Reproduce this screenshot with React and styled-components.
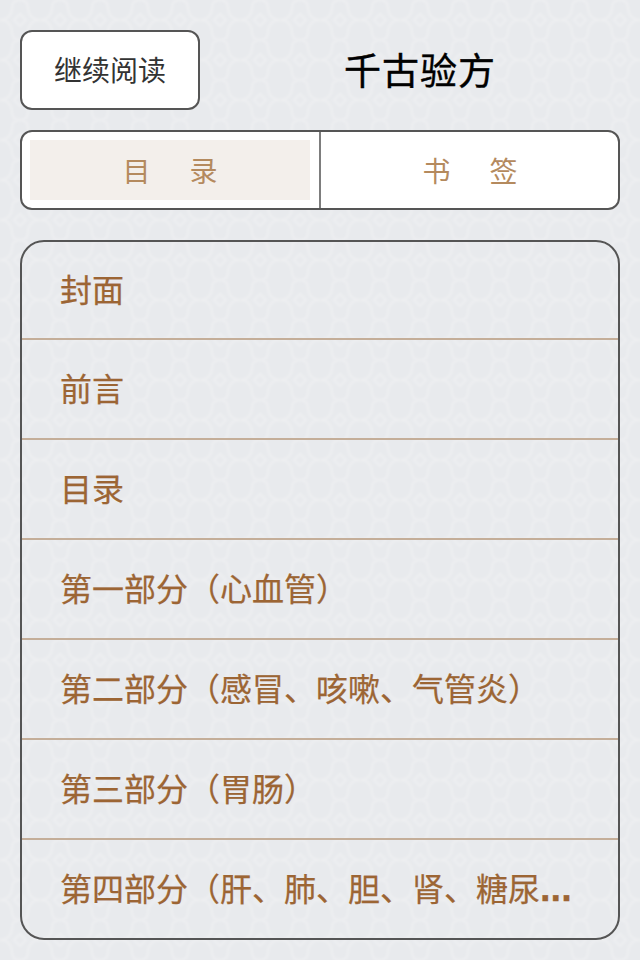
import React from "react"
import styled, { createGlobalStyle } from "styled-components"

const tile = `<svg xmlns='http://www.w3.org/2000/svg' width='40' height='40'><defs><filter id='b' x='-10%' y='-10%' width='120%' height='120%'><feGaussianBlur stdDeviation='1'/></filter></defs><rect width='40' height='40' fill='#e8eaed'/><g filter='url(#b)' fill='none' stroke='#eeeff1' stroke-width='2'><path d='M0 20C8 20 12 14 12 8S16 0 20 0s8 2 8 8 4 12 12 12'/><path d='M0 20c8 0 12 6 12 12s4 8 8 8 8-2 8-8 4-12 12-12'/><path d='M20 14l6 6-6 6-6-6z'/></g></svg>`

const GlobalStyle = createGlobalStyle`
  html, body {
    margin: 0;
    padding: 0;
  }
  body {
    width: 640px;
    height: 960px;
    overflow: hidden;
    background: #e8eaed url("data:image/svg+xml,${encodeURIComponent(tile)}");
    font-family: "Liberation Sans", "Noto Sans CJK SC", sans-serif;
  }
`

const Page = styled.div`
  box-sizing: border-box;
  width: 640px;
  height: 960px;
  padding: 30px 20px 20px;
  display: flex;
  flex-direction: column;
`

const Header = styled.div`
  display: flex;
  align-items: center;
  height: 80px;
`

const ContinueButton = styled.button`
  box-sizing: border-box;
  width: 180px;
  height: 80px;
  padding: 0 0 2px;
  flex: none;
  background: #fff;
  border: 2px solid #555;
  border-radius: 12px;
  color: #333;
  font-family: inherit;
  font-size: 28px;
`

const Title = styled.h1`
  flex: 1;
  margin: 0;
  padding: 0 0 3px 20px;
  text-align: center;
  color: #000;
  font-size: 37px;
  font-weight: 400;
  letter-spacing: 1px;
  -webkit-text-stroke: 0.4px #000;
`

const Tabs = styled.div`
  box-sizing: border-box;
  display: grid;
  grid-template-columns: 297px 1fr;
  height: 80px;
  margin-top: 20px;
  background: #fff;
  border: 2px solid #555;
  border-radius: 12px;
`

const Tab = styled.div`
  box-sizing: border-box;
  display: flex;
  padding: 8px 9px 8px 8px;

  & + & {
    padding: 8px 8px 8px 9px;
    border-left: 2px solid #7d7d7d;
  }
`

const TabLabel = styled.span`
  flex: 1;
  display: flex;
  align-items: center;
  justify-content: center;
  gap: 39px;
  background: ${(p) => (p.$active ? "#f3efeb" : "transparent")};
  color: #b48a5e;
  font-size: 28px;
`

const List = styled.ul`
  box-sizing: border-box;
  height: 700px;
  margin: 30px 0 0;
  padding: 0;
  list-style: none;
  border: 2px solid #555;
  border-radius: 24px;
  overflow: hidden;
`

const Item = styled.li`
  box-sizing: border-box;
  height: 100px;
  padding: 0 40px 0 38px;
  line-height: 101px;
  color: #9c6534;
  font-size: 32px;
  -webkit-text-stroke: 0.25px #9c6534;
  white-space: nowrap;
  border-bottom: 2px solid #c4ae99;

  &:first-child {
    height: 98px;
    line-height: 99px;
  }
  &:last-child {
    border-bottom: none;
  }
`

const Dots = styled.span`
  font-size: 38px;
  font-weight: 700;
  line-height: 0;
`

const chapters = [
  { title: "封面" },
  { title: "前言" },
  { title: "目录" },
  { title: "第一部分（心血管）" },
  { title: "第二部分（感冒、咳嗽、气管炎）" },
  { title: "第三部分（胃肠）" },
  { title: "第四部分（肝、肺、胆、肾、糖尿", cut: true },
]

export default function App() {
  return (
    <>
      <GlobalStyle />
      <Page>
        <Header>
          <ContinueButton>继续阅读</ContinueButton>
          <Title>千古验方</Title>
        </Header>
        <Tabs>
          <Tab>
            <TabLabel $active>
              <span>目</span>
              <span>录</span>
            </TabLabel>
          </Tab>
          <Tab>
            <TabLabel>
              <span>书</span>
              <span>签</span>
            </TabLabel>
          </Tab>
        </Tabs>
        <List>
          {chapters.map((c) => (
            <Item key={c.title}>
              {c.title}
              {c.cut && <Dots>...</Dots>}
            </Item>
          ))}
        </List>
      </Page>
    </>
  )
}
